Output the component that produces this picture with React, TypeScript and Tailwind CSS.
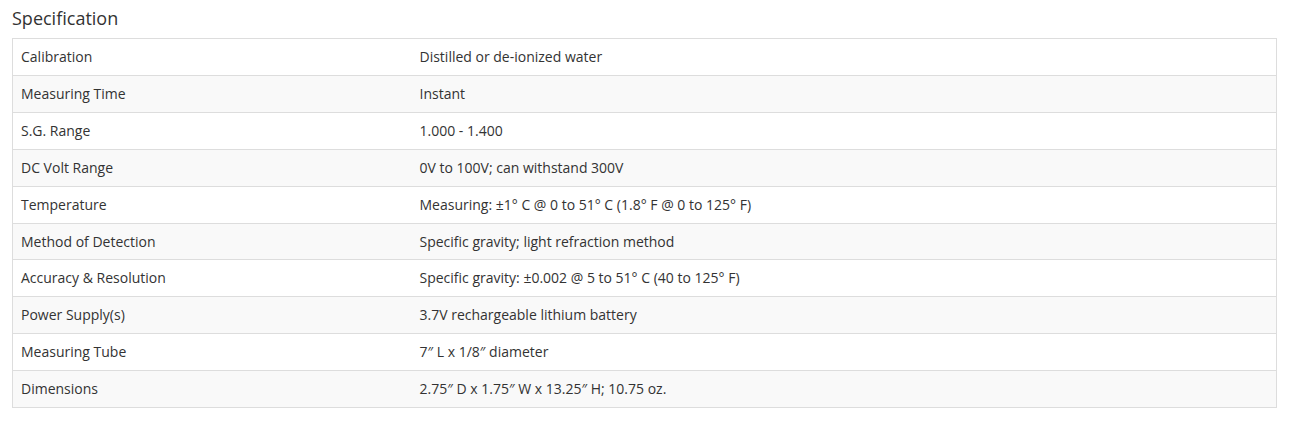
import React from "react";

const specs: [string, string][] = [
  ["Calibration", "Distilled or de-ionized water"],
  ["Measuring Time", "Instant"],
  ["S.G. Range", "1.000 - 1.400"],
  ["DC Volt Range", "0V to 100V; can withstand 300V"],
  ["Temperature", "Measuring: ±1° C @ 0 to 51° C (1.8° F @ 0 to 125° F)"],
  ["Method of Detection", "Specific gravity; light refraction method"],
  ["Accuracy & Resolution", "Specific gravity: ±0.002 @ 5 to 51° C (40 to 125° F)"],
  ["Power Supply(s)", "3.7V rechargeable lithium battery"],
  ["Measuring Tube", "7″ L x 1/8″ diameter"],
  ["Dimensions", "2.75″ D x 1.75″ W x 13.25″ H; 10.75 oz."],
];

const App: React.FC = () => {
  return (
    <div
      className="min-h-screen bg-white px-3 pt-[5px] text-[#333]"
      style={{ fontFamily: '"Open Sans", sans-serif' }}
    >
      <h2 className="mb-[7px] text-[18px] leading-[26px] font-normal">
        Specification
      </h2>
      <table className="w-[1265px] border-collapse border border-[#ddd] text-[14px] leading-[19.9px]">
        <tbody>
          {specs.map(([label, value], i) => (
            <tr
              key={label}
              className={`border-t border-[#ddd] ${i % 2 === 1 ? "bg-[#f9f9f9]" : "bg-white"}`}
            >
              <td className="w-[399px] px-2 py-2 align-top">{label}</td>
              <td className="px-2 py-2 align-top">{value}</td>
            </tr>
          ))}
        </tbody>
      </table>
    </div>
  );
};

export default App;
